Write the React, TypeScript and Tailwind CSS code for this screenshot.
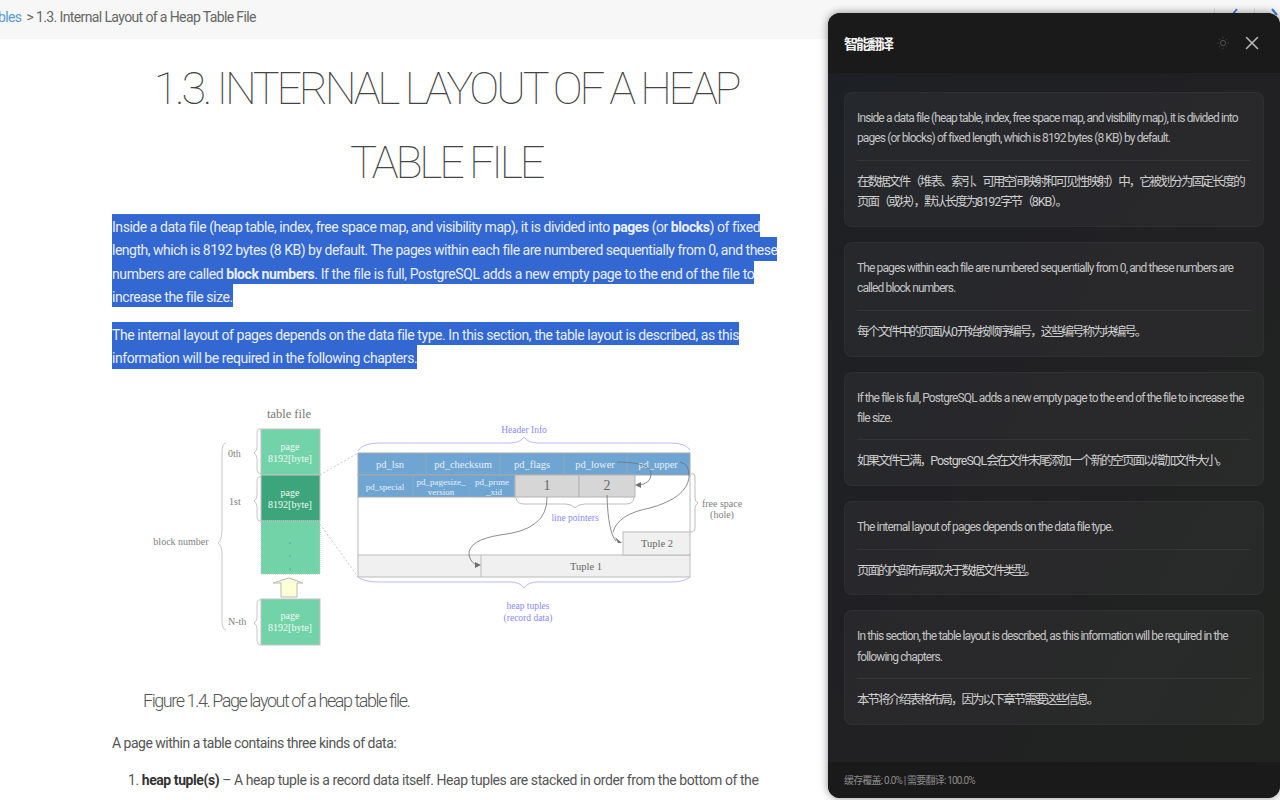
import React from "react";
import { X } from "lucide-react";

const bodyFont = "font-['Roboto','Noto_Sans_CJK_SC',sans-serif]";

function Sel({ children, className }: { children: React.ReactNode; className: string }) {
  return (
    <div className={"block w-fit h-[23.3px] leading-[26px] bg-[#3367d1] text-[#e8eefb] whitespace-nowrap " + className}>
      {children}
    </div>
  );
}

function Zh({ text }: { text: string }) {
  const parts = text.split(/([\x20-\x7e]+)/);
  return (
    <div>
      {parts.map((p, i) =>
        i % 2 === 1 ? (
          <span key={i} className="tracking-[-1px]">{p}</span>
        ) : (
          <span key={i}>{p}</span>
        )
      )}
    </div>
  );
}

function Diagram() {
  const grey = "#808080";
  const lav = "#8a8aff";
  const serif = "'Liberation Serif', serif";
  const T = (x: number, y: number, s: string, size: number, fill: string, anchor: "middle" | "start" = "middle") => (
    <text x={x} y={y} fontSize={size} fill={fill} textAnchor={anchor} fontFamily={serif}>{s}</text>
  );
  return (
    <svg className="block ml-[28px] mt-[31px]" width={620} height={260} viewBox="140 400 620 260">
      {T(289, 418, "table file", 12.5, "#777")}
      <rect x={261} y={429} width={59} height={46} fill="#72d2a8" stroke="#c4c4c4" />
      <rect x={261} y={475} width={59} height={46} fill="#3da57b" stroke="#c4c4c4" />
      <rect x={261} y={521} width={59} height={53} fill="#72d2a8" stroke="#c4c4c4" strokeDasharray="1 1" />
      <rect x={261} y={599} width={59} height={46} fill="#72d2a8" stroke="#c4c4c4" />
      {[[290, 450], [290, 496], [290, 619]].map(([x, y]) => (
        <g key={y}>
          {T(x, y, "page", 10, "#f0fbf6")}
          {T(x, y + 12, "8192[byte]", 10, "#f0fbf6")}
        </g>
      ))}
      <circle cx={290} cy={543} r={0.8} fill="#4a9" />
      <circle cx={290} cy={556} r={0.8} fill="#4a9" />
      <circle cx={290} cy={569} r={0.8} fill="#4a9" />
      <path d="M273 583H281V597H297V583H303L289 578Z" fill="#ffffd8" stroke="#b8b8b8" />
      <g fill="none" stroke="#c8c8c8" strokeWidth={1}>
        <path d="M261 429H259Q257 429 257 433V447Q257 451 254 453Q257 455 257 459V470Q257 473 261 474" />
        <path d="M261 477H259Q257 477 257 481V495Q257 499 254 501Q257 503 257 507V518Q257 521 261 521" />
        <path d="M261 600H259Q257 600 257 604V618Q257 621 254 623Q257 625 257 629V641Q257 645 261 645" />
        <path d="M226 443Q222 443 222 452V528Q222 541 218 543Q222 545 222 556V620Q222 630 226 630" />
        <path d="M320 475L358 453" strokeDasharray="2 2" />
        <path d="M320 524L358 577" strokeDasharray="2 2" />
        <path d="M691 474H694Q695 474 695 478V498Q695 502 698 503Q695 505 695 508V528Q695 532 690 532" stroke="#bdbdbd" />
        <path d="M516 498Q517 504 524 504H565Q572 504 575 508Q578 504 585 504H626Q633 504 634 498" stroke="#bdbdbd" />
      </g>
      <g fill="none" stroke={lav} strokeWidth={0.8} opacity={0.75}>
        <path d="M358 451Q362 443 380 443H510Q520 443 524 437Q528 443 538 443H670Q686 443 690 450" />
        <path d="M358 577Q364 582 380 582H510Q520 582 524 588Q528 582 538 582H670Q685 582 690 577" />
      </g>
      <rect x={358} y={555} width={332} height={22} fill="#f0f0f0" stroke="#bbb" />
      <path d="M481 555V577" stroke="#bbb" />
      <rect x={623} y={532} width={67} height={23} fill="#f0f0f0" stroke="#bbb" />
      <path d="M358 497V555M690 475V532" stroke="#bbb" fill="none" />
      <rect x={358} y={453} width={332} height={22} fill="#6fa5d3" stroke="#a9a9a9" />
      <rect x={358} y={475} width={157} height={22} fill="#6fa5d3" stroke="#a9a9a9" />
      <rect x={515} y={475} width={64} height={22} fill="#d6d6d6" stroke="#b4b4b4" />
      <rect x={579} y={475} width={56} height={22} fill="#d6d6d6" stroke="#b4b4b4" />
      <path d="M426 453V475M500 453V475M564 453V475M627 453V475M413 475V497" stroke="#8fa8c0" />
      <path d="M470 475V497" stroke="#7fa6cc" />
      {T(390, 468, "pd_lsn", 10.5, "#e6f0f8")}
      {T(463, 468, "pd_checksum", 10.5, "#e6f0f8")}
      {T(532, 468, "pd_flags", 10.5, "#e6f0f8")}
      {T(595, 468, "pd_lower", 10.5, "#e6f0f8")}
      {T(658, 468, "pd_upper", 10.5, "#e6f0f8")}
      {T(385, 490, "pd_special", 9, "#e6f0f8")}
      {T(441, 485, "pd_pagesize_", 9, "#e6f0f8")}
      {T(441, 495, "version", 9, "#e6f0f8")}
      {T(492, 485, "pd_prune", 9, "#e6f0f8")}
      {T(494, 495, "_xid", 9, "#e6f0f8")}
      {T(547, 490, "1", 14, "#666")}
      {T(607, 490, "2", 14, "#666")}
      {T(586, 570, "Tuple 1", 10.5, "#666")}
      {T(657, 547, "Tuple 2", 10.5, "#666")}
      {T(524, 433, "Header Info", 9.5, lav)}
      {T(575, 521, "line pointers", 9.5, lav)}
      {T(528, 609, "heap tuples", 9.5, lav)}
      {T(528, 621, "(record data)", 9.5, lav)}
      {T(722, 507, "free space", 10, grey)}
      {T(722, 518, "(hole)", 10, grey)}
      {T(181, 545, "block number", 10, grey)}
      {T(228, 457, "0th", 10, grey, "start")}
      {T(229, 505, "1st", 10, grey, "start")}
      {T(228, 625, "N-th", 10, grey, "start")}
      <g fill="none" stroke="#707070" strokeWidth={0.8}>
        <path d="M617 462Q651 462 651 474Q651 484 638 485" />
        <path d="M680 462Q690 464 689 478Q686 498 650 508Q618 514 613 532" />
        <path d="M547 497Q548 530 500 535Q468 540 469 555Q471 564 478 565" />
        <path d="M607 495Q608 532 616 541" />
      </g>
      <g fill="#707070">
        <path d="M635 485L641 482V488Z" />
        <path d="M481 565L475 562V568Z" />
        <path d="M622 543L615 537L618 543Z" />
      </g>
    </svg>
  );
}

const cards = [
  {
    en: ["Inside a data file (heap table, index, free space map, and visibility map), it is divided into", "pages (or blocks) of fixed length, which is 8192 bytes (8 KB) by default."],
    zh: ["在数据文件（堆表、索引、可用空间映射和可见性映射）中，它被划分为固定长度的", "页面（或块），默认长度为8192字节（8KB）。"],
  },
  {
    en: ["The pages within each file are numbered sequentially from 0, and these numbers are", "called block numbers."],
    zh: ["每个文件中的页面从0开始按顺序编号，这些编号称为块编号。"],
  },
  {
    en: ["If the file is full, PostgreSQL adds a new empty page to the end of the file to increase the", "file size."],
    zh: ["如果文件已满，PostgreSQL会在文件末尾添加一个新的空页面以增加文件大小。"],
  },
  {
    en: ["The internal layout of pages depends on the data file type."],
    zh: ["页面的内部布局取决于数据文件类型。"],
  },
  {
    en: ["In this section, the table layout is described, as this information will be required in the", "following chapters."],
    zh: ["本节将介绍表格布局，因为以下章节需要这些信息。"],
  },
];

export default function App() {
  return (
    <div className={"relative w-[1280px] h-[800px] overflow-hidden bg-white text-[#555] " + bodyFont}>
      <header className="relative h-[39px] bg-[#f7f7f7] flex items-center pb-[5px] text-[14px] text-[#666] whitespace-nowrap tracking-[-0.62px]">
        <span className="ml-[-2px] text-[#5b9bd5]">bles</span>
        <span className="ml-[5px]">&gt; 1.3. Internal Layout of a Heap Table File</span>
        <div className="absolute left-[1214px] top-[8px] w-px h-[6px] bg-[#ddd]" />
        <div className="absolute left-[1254px] top-[8px] w-px h-[6px] bg-[#ddd]" />
        <svg className="absolute left-[1230px] top-[8px]" width={50} height={8} viewBox="0 0 50 8" fill="none" stroke="#3a80d2" strokeWidth={2}>
          <path d="M7 1L3 6" />
          <path d="M42 1L47 7" />
        </svg>
      </header>

      <main className="ml-[112px] w-[672px]">
        <h1 className="mt-[13px] pr-[4px] text-center text-[45px] leading-[74px] font-thin text-[#444] uppercase tracking-[-3.32px] whitespace-nowrap">
          1.3. Internal Layout of a Heap
          <br />
          Table File
        </h1>
        <div className="mt-[14px] text-[14px]">
          <Sel className="tracking-[-0.455px]">Inside a data file (heap table, index, free space map, and visibility map), it is divided into <b>pages</b> (or <b>blocks</b>) of fixed</Sel>
          <Sel className="tracking-[-0.49px]">length, which is 8192 bytes (8 KB) by default. The pages within each file are numbered sequentially from 0, and these</Sel>
          <Sel className="tracking-[-0.41px]">numbers are called <b>block numbers</b>. If the file is full, PostgreSQL adds a new empty page to the end of the file to</Sel>
          <Sel className="tracking-[-0.43px]">increase the file size.</Sel>
        </div>
        <div className="mt-[15px] text-[14px]">
          <Sel className="tracking-[-0.44px]">The internal layout of pages depends on the data file type. In this section, the table layout is described, as this</Sel>
          <Sel className="tracking-[-0.45px]">information will be required in the following chapters.</Sel>
        </div>
        <Diagram />
        <p className="ml-[31px] mt-[28px] text-[18px] font-light tracking-[-1.45px] text-[#555] leading-[26px] whitespace-nowrap">Figure 1.4. Page layout of a heap table file.</p>
        <p className="mt-[18px] text-[14px] leading-[23px] tracking-[-0.5px] whitespace-nowrap">A page within a table contains three kinds of data:</p>
        <ol className="mt-[14px] ml-[16px] text-[14px] leading-[23px] tracking-[-0.43px] whitespace-nowrap">
          <li>1.&nbsp;<b className="text-[#333]">heap tuple(s)</b> – A heap tuple is a record data itself. Heap tuples are stacked in order from the bottom of the</li>
          <li className="ml-[14px]">page.</li>
        </ol>
      </main>

      <aside className="absolute left-[828px] top-[13px] w-[452px] h-[785px] rounded-[12px] overflow-hidden flex flex-col bg-gradient-to-br from-[#1c2024] via-[#212023] to-[#202320] shadow-[0_0_8px_rgba(0,0,0,0.45)] font-['Roboto','Noto_Sans_CJK_SC',sans-serif]">
        <div className="h-[60px] shrink-0 bg-[#1a1a1a] flex items-center pl-[16px] pr-[17px]">
          <span className="mt-[2px] text-[14px] font-bold text-[#f5f5f5] tracking-[-2px]">智能翻译</span>
          <svg className="ml-auto" width={14} height={14} viewBox="0 0 24 24" fill="none" stroke="#555" strokeWidth={1.6}>
            <circle cx={12} cy={12} r={4.5} />
            <path d="M12 2v2M12 20v2M2 12h2M20 12h2M5 5l1.4 1.4M17.6 17.6L19 19M5 19l1.4-1.4M17.6 6.4L19 5" />
          </svg>
          <X className="ml-[11px] text-[#b8b8b8]" size={22} strokeWidth={1.7} />
        </div>
        <div className="flex-1 pt-[19px] px-[16px] flex flex-col gap-[15px]">
          {cards.map((c, i) => (
            <section key={i} className="rounded-[8px] bg-white/[0.04] border border-white/[0.03] px-[12px] pt-[15px] pb-[13.4px]">
              <div className="text-[12px] leading-[20.4px] text-[#c4c4c4] tracking-[-0.88px] whitespace-nowrap">
                {c.en.map((l) => <div key={l}>{l}</div>)}
              </div>
              <div className="mt-[11px] pt-[11px] border-t border-white/[0.06] text-[12.5px] leading-[20.4px] text-[#cfcfcf] whitespace-nowrap tracking-[-2.05px]">
                {c.zh.map((l) => <Zh key={l} text={l} />)}
              </div>
            </section>
          ))}
        </div>
        <div className="h-[36px] shrink-0 bg-[#1a1a1a] flex items-center pl-[16px] text-[10px] text-[#8a8a8a] tracking-[-0.8px]">
          缓存覆盖: 0.0% | 需要翻译: 100.0%
        </div>
      </aside>
    </div>
  );
}
